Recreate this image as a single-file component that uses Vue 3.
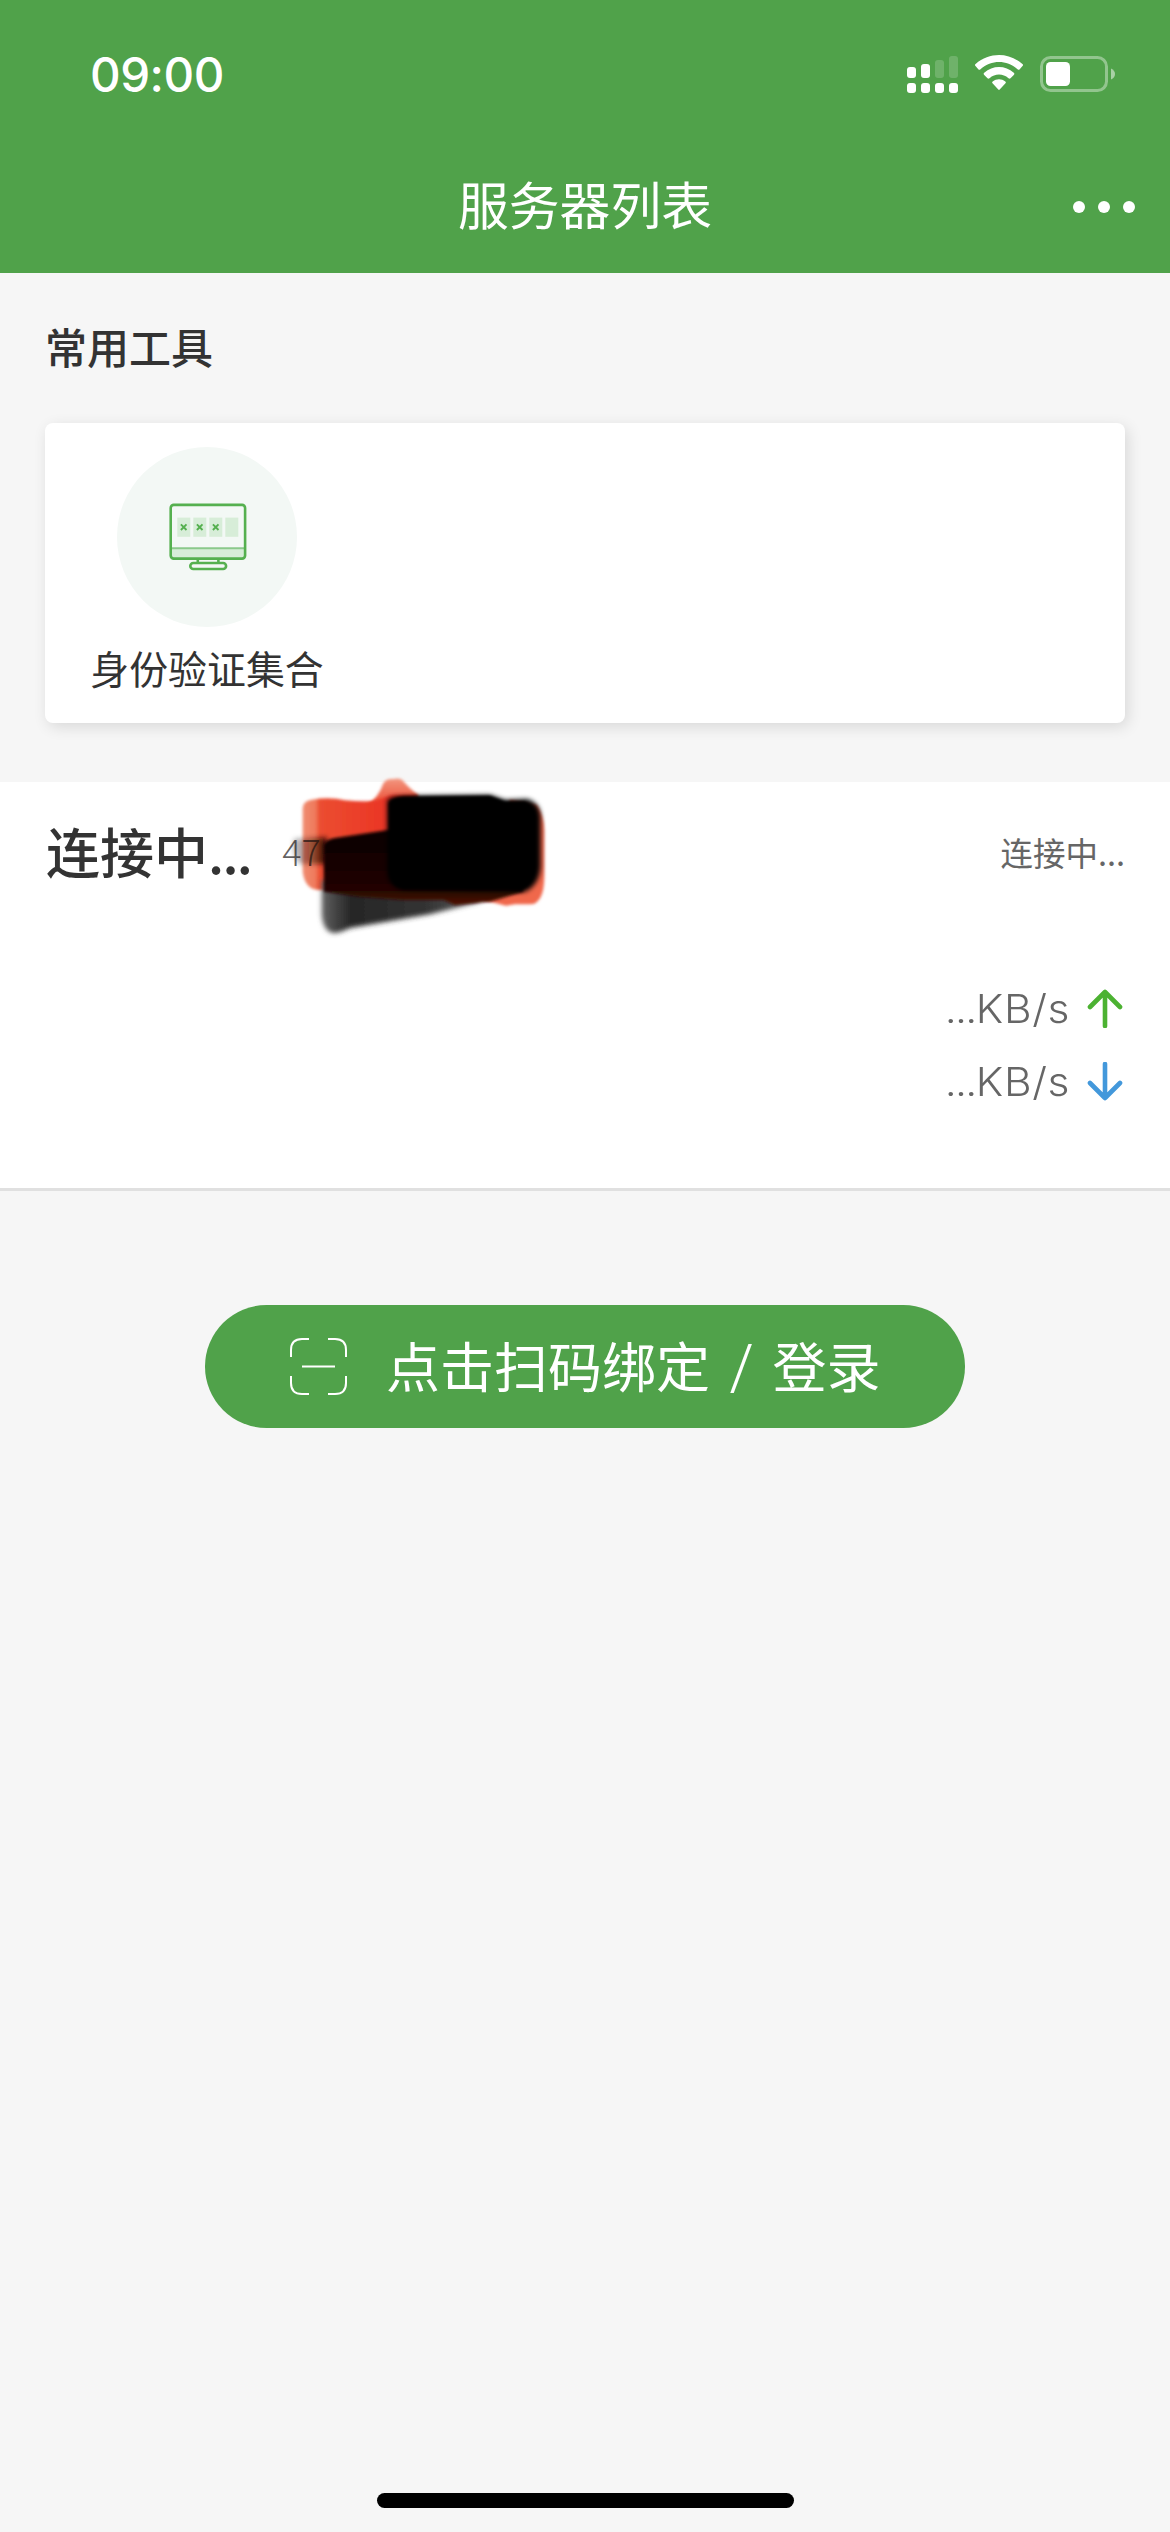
<script setup>
const tools = [{ name: '身份验证集合' }]
const rates = [
  { dir: 'up', value: '...', unit: 'KB/s', color: '#4cb232', path: 'M19 37V3M4 18L19 3L34 18' },
  { dir: 'down', value: '...', unit: 'KB/s', color: '#4398db', path: 'M19 2V36M4 21L19 36L34 21' },
]
</script>

<template>
  <div class="page">
    <header class="header">
      <div class="status">
        <span class="time">09:00</span>
        <svg class="indicators" width="150" height="40" viewBox="0 0 150 40" fill="#fff">
          <rect x="7" y="13" width="9" height="11" rx="3" />
          <rect x="21" y="10" width="9" height="14" rx="3" />
          <rect x="35" y="6" width="9" height="18" rx="3" opacity=".18" />
          <rect x="49" y="2" width="9" height="22" rx="3" opacity=".18" />
          <rect v-for="x in [7, 21, 35, 49]" :key="x" :x="x" y="29" width="9" height="10" rx="3" />
          <path d="M75.500 12.100Q74.300 11.100 75.600 9.900C89.500-2 108.500-2 122.400 9.900Q123.700 11.100 122.500 12.100L119.500 15.500Q118.700 16.300 117.500 15.300C106.500 5.700 91.500 5.700 80.500 15.300Q79.300 16.300 78.500 15.500Z" />
          <path d="M84 20.700Q83 19.700 84.200 18.700C92.700 11.100 105.300 11.100 113.800 18.700Q115 19.700 114 20.700L110.500 24.300Q109.600 25.100 108.500 24.200C103 19.400 95 19.400 89.500 24.200Q88.400 25.100 87.500 24.300Z" />
          <path d="M92.500 29.300Q91.500 28.300 92.700 27.500C96.500 24.600 101.500 24.600 105.300 27.500Q106.500 28.300 105.500 29.300L99.700 35.500Q99 36.300 98.300 35.500Z" />
        </svg>
        <svg class="battery" width="76" height="36" viewBox="0 0 76 36">
          <rect x="1.500" y="1.500" width="65" height="33" rx="9" fill="none" stroke="#fff" stroke-opacity=".38" stroke-width="3" />
          <rect x="6" y="6" width="24" height="24" rx="4.500" fill="#fff" />
          <path d="M71 12.500Q75 14.500 75 18T71 23.500Z" fill="#fff" fill-opacity=".5" />
        </svg>
      </div>
      <div class="nav">
        <h1>服务器列表</h1>
        <div class="more"><i></i><i></i><i></i></div>
      </div>
    </header>

    <h2 class="section-title">常用工具</h2>
    <section class="card">
      <div v-for="tool in tools" :key="tool.name" class="tool">
        <svg width="180" height="180" viewBox="0 0 180 180" fill="none" stroke="#55b04f" stroke-width="2.600">
          <circle cx="90" cy="90" r="90" fill="#f3f8f5" stroke="none" />
          <rect x="54" y="101" width="74" height="10.500" fill="#d7edd8" stroke="none" />
          <path d="M54 101.200H128" stroke="#8bc98b" stroke-width="2" />
          <g v-for="(x, i) in [60.3, 76.3, 92.3, 108.3]" :key="x">
            <rect :x="x" y="70.600" width="13" height="19.200" fill="#d7edd8" stroke="none" />
            <path v-if="i < 3" :transform="`translate(${x + 6.4} 80.200)`" d="M-2.800-2.800L2.800 2.800M2.800-2.800L-2.800 2.800" stroke-width="1.900" />
          </g>
          <rect x="53.700" y="57.900" width="74.400" height="53.700" rx="3" />
          <path d="M80.800 112V116M101.400 112V116" />
          <rect x="73.300" y="116" width="35.800" height="6" rx="3" />
        </svg>
        <span class="tool-name">{{ tool.name }}</span>
      </div>
    </section>

    <section class="server">
      <div class="server-head">
        <span class="server-name">连接中<span class="dots">...</span></span>
        <span class="server-ip">47</span>
        <span class="server-state">连接中...</span>
      </div>
      <div class="rates">
        <div v-for="rate in rates" :key="rate.dir" class="rate">
          <span class="rate-text"><span class="rate-value">{{ rate.value }}</span>{{ rate.unit }}</span>
          <svg width="38" height="39" viewBox="0 0 38 39" fill="none" :stroke="rate.color" stroke-width="4.600" stroke-linecap="round" stroke-linejoin="round">
            <path :d="rate.path" />
          </svg>
        </div>
      </div>
      <svg class="scribble" width="290" height="170" viewBox="0 0 870 510">
        <defs>
          <filter id="soft" x="-10%" y="-10%" width="120%" height="120%"><feGaussianBlur stdDeviation="4" /></filter>
          <filter id="softer" x="-50%" y="-50%" width="200%" height="200%"><feGaussianBlur stdDeviation="8" /></filter>
          <linearGradient id="red" gradientUnits="userSpaceOnUse" x1="95" x2="350" y1="0" y2="0">
            <stop offset="0" stop-color="#f08d73" /><stop offset=".16" stop-color="#ef7a5c" />
            <stop offset=".21" stop-color="#eb4d30" /><stop offset="1" stop-color="#ea3525" />
          </linearGradient>
          <linearGradient id="tip" x1="0" x2="0" y1="0" y2="1">
            <stop offset="0" stop-color="#f3967f" /><stop offset="1" stop-color="#ea4229" />
          </linearGradient>
          <linearGradient id="tail" gradientUnits="userSpaceOnUse" x1="150" x2="600" y1="0" y2="0">
            <stop offset="0" stop-color="#666" /><stop offset=".2" stop-color="#262626" />
            <stop offset=".7" stop-color="#333" /><stop offset="1" stop-color="#555" />
          </linearGradient>
          <linearGradient id="dark" x1="0" x2="0" y1="0" y2="1">
            <stop offset="0" stop-color="#080000" /><stop offset=".45" stop-color="#160200" />
            <stop offset=".8" stop-color="#220500" /><stop offset="1" stop-color="#501106" />
          </linearGradient>
          <linearGradient id="edge" x1="0" x2="1" y1="0" y2="0">
            <stop offset="0" stop-color="#000" stop-opacity=".3" /><stop offset=".4" stop-color="#321009" stop-opacity=".35" />
            <stop offset=".75" stop-color="#321009" stop-opacity=".6" /><stop offset="1" stop-color="#160200" />
          </linearGradient>
        </defs>
        <path filter="url(#soft)" fill="url(#tip)" d="M290 105Q325 85 340 40Q348 25 370 27Q392 22 400 34Q425 62 445 75V115H290Z" />
        <path filter="url(#soft)" fill="url(#red)" d="M98 115Q99 92 125 89Q180 80 225 91Q280 96 315 92L365 75L440 74V360H150Q105 360 98 305Z" />
        <path filter="url(#soft)" fill="#f0674b" d="M720 90L800 105Q823 140 823 180V320Q822 402 780 403H735L708 407L640 390Z" />
        <path filter="url(#softer)" fill="url(#tail)" d="M155 330L600 360L630 395L480 433L240 474Q205 491 190 489Q160 485 155 435Z" />
        <path filter="url(#softer)" fill="url(#edge)" d="M72 206L170 202V282H90Q72 265 70 230Z" />
        <path filter="url(#soft)" fill="url(#dark)" d="M160 225Q165 212 190 205L355 180H760V365L660 395L555 405L520 390L400 390L270 380L162 365Z" />
        <path filter="url(#softer)" fill="#000" d="M352 90Q360 80 400 78L660 75L705 90L770 87Q812 98 812 145V290Q808 345 765 365L400 358Q358 354 352 310Z" />
        <path filter="url(#soft)" fill="#000" d="M358 100Q365 82 400 80L660 78L705 95L765 95Q788 110 790 160V300Q785 350 750 358H400Q365 350 358 310Z" />
      </svg>
    </section>

    <button class="scan">
      <svg width="57" height="57" viewBox="0 0 57 57" fill="none" stroke="#fff" stroke-width="2">
        <path d="M1 19V12Q1 1 12 1H19M38 1H45Q56 1 56 12V19M56 38V45Q56 56 45 56H38M19 56H12Q1 56 1 45V38M12 28.500H45" />
      </svg>
      <span class="scan-label">点击扫码绑定 <span class="slash">/</span> 登录</span>
    </button>

    <div class="home-bar"></div>
  </div>
</template>

<style>
body {
  margin: 0;
}
</style>

<style scoped>
.page {
  width: 1170px;
  height: 2532px;
  display: flex;
  flex-direction: column;
  background: #f6f6f6;
  color: #333;
  font-family: "Noto Sans CJK SC", sans-serif;
  overflow: hidden;
}
.header {
  height: 273px;
  background: #50a24a;
  color: #fff;
}
.status {
  display: flex;
  height: 141px;
  align-items: flex-start;
  box-sizing: border-box;
  padding: 54px 54px 0 90px;
}
.time {
  font: 550 47.500px/42px Inter, sans-serif;
  letter-spacing: -0.500px;
}
.indicators {
  margin-left: auto;
  flex: none;
}
.battery {
  margin: 2px 0 0 -10px;
  flex: none;
}
.nav {
  display: grid;
  grid-template-columns: 1fr auto 1fr;
  align-items: center;
  height: 132px;
  padding-right: 35px;
  padding-left: 35px;
}
h1 {
  grid-column: 2;
  margin: 0;
  padding-bottom: 7px;
  font-size: 50.800px;
  line-height: 125px;
  font-weight: 400;
}
.more {
  justify-self: end;
  display: flex;
  gap: 13px;
}
.more i {
  width: 12px;
  height: 12px;
  border-radius: 50%;
  background: #fff;
}
.section-title {
  margin: 0;
  height: 150px;
  padding-left: 45px;
  font-size: 42px;
  line-height: 146px;
  font-weight: 500;
}
.card {
  display: flex;
  height: 300px;
  margin: 0 45px;
  box-sizing: border-box;
  padding: 24px 42px;
  border-radius: 8px;
  background: #fff;
  box-shadow: 3px 4px 15px rgba(0, 0, 0, 0.12);
}
.tool {
  width: 240px;
  display: flex;
  flex-direction: column;
  align-items: center;
}
.tool svg {
  flex: none;
}
.tool-name {
  font-size: 38.900px;
  line-height: 60px;
  margin-top: 10px;
  white-space: nowrap;
}
.server {
  position: relative;
  height: 409px;
  box-sizing: border-box;
  margin-top: 59px;
  padding: 0 45px;
  background: #fff;
  border-bottom: 3px solid #e0e0e0;
}
.server-head {
  display: flex;
  align-items: center;
  height: 142px;
}
.server-name {
  padding: 0 0 6px 1px;
  font-size: 54px;
  font-weight: 500;
}
.dots {
  letter-spacing: -1.700px;
}
.server-ip {
  position: relative;
  z-index: 1;
  margin-left: 31px;
  padding-bottom: 7px;
  color: rgba(20, 15, 15, 0.66);
  font-size: 36px;
  font-weight: 300;
}
.server-state {
  margin-left: auto;
  padding-bottom: 3px;
  color: #666;
  font-size: 32.500px;
}
.rates {
  display: flex;
  flex-direction: column;
  padding-top: 48px;
}
.rate {
  display: flex;
  justify-content: flex-end;
  align-items: center;
  gap: 16px;
  height: 73px;
  padding-right: 1px;
  color: #666;
  font: 300 39px Inter, sans-serif;
}
.rate-text {
  transform: scaleX(1.09);
  transform-origin: right center;
  letter-spacing: 0.600px;
}
.rate-value {
  letter-spacing: -1.500px;
}
.scribble {
  position: absolute;
  left: 270px;
  top: -12px;
}
.scan {
  display: flex;
  align-items: center;
  gap: 39px;
  width: 760px;
  height: 123px;
  margin: 114px auto 0;
  padding: 0 0 0 85px;
  border: 0;
  border-radius: 62px;
  background: #50a24a;
  color: #fff;
  font-family: inherit;
  font-size: 54px;
  word-spacing: 7.500px;
  white-space: nowrap;
}
.scan svg {
  flex: none;
}
.scan-label {
  padding-bottom: 4px;
}
.slash {
  font: 300 68px/0 "Open Sans", sans-serif;
  vertical-align: -5px;
}
.home-bar {
  width: 417px;
  height: 15px;
  margin: auto auto 24px;
  border-radius: 8px;
  background: #000;
}
</style>
